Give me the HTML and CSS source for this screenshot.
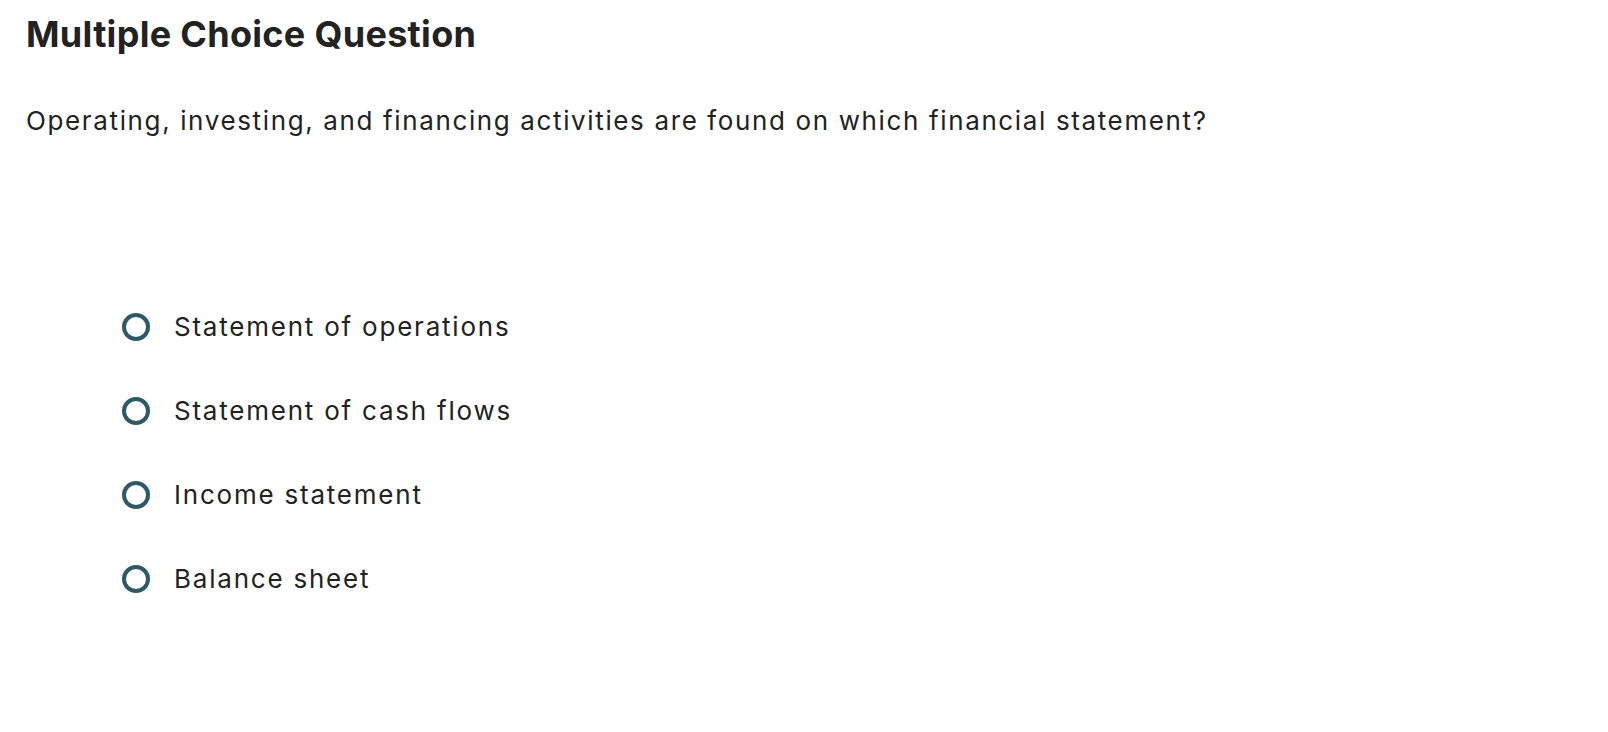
FILE: index.html
```html
<!DOCTYPE html>
<html>
<head>
<meta charset="utf-8">
<link rel="stylesheet" href="styles.css">
</head>
<body>
<main class="page">
  <h1 class="title">Multiple Choice Question</h1>
  <p class="question">Operating, investing, and financing activities are found on which financial statement?</p>
  <ul class="choices">
    <li class="choice"><span class="radio"></span><span class="label">Statement of operations</span></li>
    <li class="choice"><span class="radio"></span><span class="label">Statement of cash flows</span></li>
    <li class="choice"><span class="radio"></span><span class="label">Income statement</span></li>
    <li class="choice"><span class="radio"></span><span class="label">Balance sheet</span></li>
  </ul>
</main>
</body>
</html>
```
FILE: styles.css
```css
html, body {
  margin: 0;
  padding: 0;
  background: #ffffff;
}
.page {
  font-family: Inter, "Noto Sans", sans-serif;
  font-variant-ligatures: none;
  color: #222222;
  padding: 10px 0 0 26px;
}
.title {
  margin: 0;
  font-size: 36px;
  line-height: 48px;
  font-weight: 700;
  letter-spacing: 0.3px;
}
.question {
  margin: 45px 0 0 0;
  font-size: 26px;
  line-height: 36px;
  letter-spacing: 1.63px;
}
.choices {
  list-style: none;
  margin: 170px 0 0 0;
  padding: 0 0 0 96px;
  display: flex;
  flex-direction: column;
  gap: 48px;
}
.choice {
  display: flex;
  align-items: center;
  gap: 24px;
  font-size: 26px;
  line-height: 36px;
  letter-spacing: 1.78px;
}
.radio {
  width: 20px;
  height: 20px;
  border: 4px solid #2e5968;
  border-radius: 50%;
  flex: none;
}
```
